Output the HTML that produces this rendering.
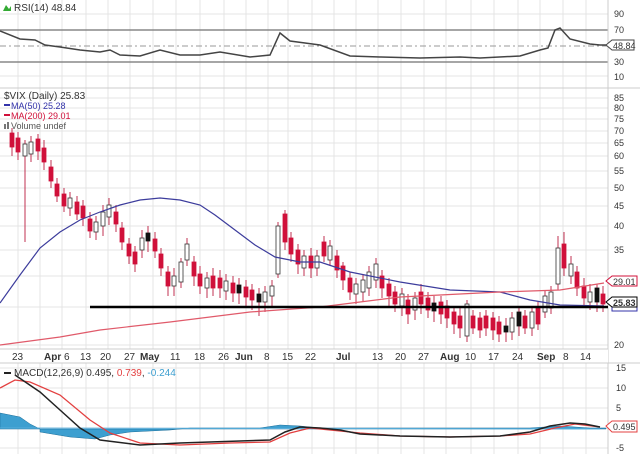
<!DOCTYPE html><html><head><style>
body{margin:0;background:#fff;width:640px;height:454px;overflow:hidden}
svg{display:block;font-family:"Liberation Sans",sans-serif}
.g line{stroke:#e4e4e4;stroke-width:1}
.r{fill:#d0103a;stroke:#d0103a;stroke-width:.8}
.w{fill:#fff;stroke:#333;stroke-width:.8}
.k{fill:#111;stroke:#111;stroke-width:.8}
.ax{font-size:9px;fill:#333}
.dx{font-size:10px;fill:#333}
</style></head><body>
<svg width="640" height="454" xmlns="http://www.w3.org/2000/svg">
<g class="g">
<line x1="18" y1="0" x2="18" y2="454"/><line x1="40" y1="0" x2="40" y2="454"/><line x1="62" y1="0" x2="62" y2="454"/><line x1="86" y1="0" x2="86" y2="454"/><line x1="108" y1="0" x2="108" y2="454"/><line x1="130" y1="0" x2="130" y2="454"/><line x1="153" y1="0" x2="153" y2="454"/><line x1="176" y1="0" x2="176" y2="454"/><line x1="200" y1="0" x2="200" y2="454"/><line x1="224" y1="0" x2="224" y2="454"/><line x1="246" y1="0" x2="246" y2="454"/><line x1="268" y1="0" x2="268" y2="454"/><line x1="288" y1="0" x2="288" y2="454"/><line x1="312" y1="0" x2="312" y2="454"/><line x1="334" y1="0" x2="334" y2="454"/><line x1="356" y1="0" x2="356" y2="454"/><line x1="378" y1="0" x2="378" y2="454"/><line x1="401" y1="0" x2="401" y2="454"/><line x1="424" y1="0" x2="424" y2="454"/><line x1="446" y1="0" x2="446" y2="454"/><line x1="471" y1="0" x2="471" y2="454"/><line x1="494" y1="0" x2="494" y2="454"/><line x1="518" y1="0" x2="518" y2="454"/><line x1="540" y1="0" x2="540" y2="454"/><line x1="563" y1="0" x2="563" y2="454"/><line x1="586" y1="0" x2="586" y2="454"/>
<line x1="0" y1="14" x2="608" y2="14"/><line x1="0" y1="76" x2="608" y2="76"/>
<line x1="0" y1="98" x2="608" y2="98"/><line x1="0" y1="108" x2="608" y2="108"/><line x1="0" y1="119" x2="608" y2="119"/><line x1="0" y1="131" x2="608" y2="131"/><line x1="0" y1="143" x2="608" y2="143"/><line x1="0" y1="156" x2="608" y2="156"/><line x1="0" y1="171" x2="608" y2="171"/><line x1="0" y1="188" x2="608" y2="188"/><line x1="0" y1="206" x2="608" y2="206"/><line x1="0" y1="226" x2="608" y2="226"/><line x1="0" y1="250" x2="608" y2="250"/><line x1="0" y1="276" x2="608" y2="276"/><line x1="0" y1="307" x2="608" y2="307"/><line x1="0" y1="345" x2="608" y2="345"/>
<line x1="0" y1="368" x2="608" y2="368"/><line x1="0" y1="388" x2="608" y2="388"/><line x1="0" y1="408" x2="608" y2="408"/><line x1="0" y1="428" x2="608" y2="428"/><line x1="0" y1="448" x2="608" y2="448"/>
</g>
<!-- RSI -->
<line x1="0" y1="30" x2="608" y2="30" stroke="#888" stroke-width="1.5"/>
<line x1="0" y1="62" x2="608" y2="62" stroke="#888" stroke-width="1.5"/>
<line x1="0" y1="46" x2="608" y2="46" stroke="#999" stroke-dasharray="6,3,2,3"/>
<polyline fill="none" stroke="#444" stroke-width="1.5" points="0,31 20,39 35,40 45,45 60,47 80,50 100,52 110,50 120,55 140,56 160,50 180,55 200,55 220,52 250,57 270,55 280,33 290,41 305,43 320,45 350,56 380,57 420,58 460,57 480,58 520,56 540,50 548,48 555,30 560,28 570,39 590,44 600,45 606,45"/>
<line x1="0" y1="88" x2="640" y2="88" stroke="#ccc"/>
<line x1="608" y1="0" x2="608" y2="454" stroke="#ccc"/>
<path d="M3,11 L6,5 L9,9 L11,6 L11,11Z" fill="#3a3"/>
<text x="14" y="11" font-size="10" fill="#333">RSI(14) 48.84</text>
<text class="ax" x="614" y="17">90</text><text class="ax" x="614" y="33">70</text><text class="ax" x="614" y="65">30</text><text class="ax" x="614" y="80">10</text>
<path d="M606,45 L612,40 H634 V50 H612Z" fill="#fff" stroke="#444"/><text class="ax" x="613" y="49">48.84</text>
<!-- wicks -->
<path fill="none" stroke="#c03050" stroke-width="1" d="M12,128V156M18,132V160M25,140V242M31,136V162M38,134V160M44,140V170M51,160V188M57,178V202M64,188V212M70,192V216M77,196V220M83,200V226M90,212V238M96,216V240M103,205V236M109,198V225M116,205V232M122,222V250M129,238V264M135,246V272M142,230V258M148,226V252M155,232V258M161,248V276M168,266V296M174,268V296M181,258V288M187,238V266M194,256V286M200,266V294M207,272V298M213,268V296M220,270V298M226,274V300M233,276V302M239,278V304M246,280V306M252,284V310M259,288V316M265,286V312M272,280V306M278,222V278M285,210V250M291,232V262M298,244V274M304,250V276M311,248V278M317,250V276M324,236V262M330,240V266M337,250V278M343,262V290M350,272V300M356,278V304M363,274V302M369,266V296M376,258V288M382,270V298M389,278V306M395,286V312M402,288V316M408,294V324M415,292V320M421,284V314M428,292V318M434,296V322M441,296V324M447,300V328M454,306V334M460,308V338M467,300V342M473,310V334M480,312V338M486,310V336M493,312V340M499,316V342M506,318V342M512,312V340M519,308V336M525,310V334M532,306V336M538,302V330M545,290V318M551,286V314M558,236V290M564,232V276M571,256V284M577,266V296M584,278V306M590,284V310M597,284V312M603,286V312"/>
<!-- bodies -->
<rect class="r" x="10" y="133" width="4" height="14"/><rect class="r" x="16" y="138" width="4" height="14"/><rect class="w" x="23" y="144" width="4" height="12"/><rect class="w" x="29" y="142" width="4" height="12"/><rect class="r" x="36" y="139" width="4" height="12"/><rect class="r" x="42" y="148" width="4" height="14"/>
<rect class="r" x="49" y="167" width="4" height="14"/><rect class="r" x="55" y="184" width="4" height="12"/><rect class="r" x="62" y="194" width="4" height="12"/><rect class="w" x="68" y="198" width="4" height="10"/><rect class="r" x="75" y="202" width="4" height="12"/><rect class="r" x="81" y="206" width="4" height="12"/>
<rect class="r" x="88" y="219" width="4" height="12"/><rect class="w" x="94" y="222" width="4" height="10"/><rect class="w" x="101" y="212" width="4" height="14"/><rect class="w" x="107" y="205" width="4" height="12"/><rect class="r" x="114" y="212" width="4" height="12"/><rect class="r" x="120" y="228" width="4" height="14"/>
<rect class="r" x="127" y="244" width="4" height="12"/><rect class="r" x="133" y="252" width="4" height="12"/><rect class="w" x="140" y="238" width="4" height="12"/><rect class="k" x="146" y="233" width="4" height="8"/><rect class="r" x="153" y="239" width="4" height="12"/><rect class="r" x="159" y="254" width="4" height="14"/>
<rect class="r" x="166" y="272" width="4" height="14"/><rect class="w" x="172" y="276" width="4" height="10"/><rect class="w" x="179" y="262" width="4" height="20"/><rect class="w" x="185" y="244" width="4" height="16"/><rect class="r" x="192" y="262" width="4" height="14"/><rect class="r" x="198" y="274" width="4" height="12"/>
<rect class="w" x="205" y="278" width="4" height="10"/><rect class="r" x="211" y="276" width="4" height="12"/><rect class="r" x="218" y="278" width="4" height="10"/><rect class="w" x="224" y="281" width="4" height="10"/><rect class="r" x="231" y="283" width="4" height="10"/><rect class="k" x="237" y="285" width="4" height="8"/>
<rect class="r" x="244" y="287" width="4" height="10"/><rect class="r" x="250" y="290" width="4" height="10"/><rect class="k" x="257" y="294" width="4" height="8"/><rect class="w" x="263" y="292" width="4" height="10"/><rect class="w" x="270" y="286" width="4" height="10"/><rect class="w" x="276" y="226" width="4" height="48"/>
<rect class="r" x="283" y="214" width="4" height="28"/><rect class="r" x="289" y="238" width="4" height="16"/><rect class="r" x="296" y="250" width="4" height="14"/><rect class="w" x="302" y="256" width="4" height="12"/><rect class="r" x="309" y="256" width="4" height="12"/><rect class="w" x="315" y="256" width="4" height="12"/>
<rect class="r" x="322" y="242" width="4" height="14"/><rect class="w" x="328" y="246" width="4" height="14"/><rect class="r" x="335" y="256" width="4" height="14"/><rect class="r" x="341" y="266" width="4" height="14"/><rect class="r" x="348" y="278" width="4" height="14"/><rect class="w" x="354" y="284" width="4" height="10"/>
<rect class="w" x="361" y="280" width="4" height="12"/><rect class="w" x="367" y="272" width="4" height="16"/><rect class="w" x="374" y="264" width="4" height="16"/><rect class="r" x="380" y="276" width="4" height="12"/><rect class="r" x="387" y="284" width="4" height="12"/><rect class="r" x="393" y="292" width="4" height="12"/>
<rect class="w" x="400" y="294" width="4" height="12"/><rect class="r" x="406" y="300" width="4" height="14"/><rect class="w" x="413" y="298" width="4" height="12"/><rect class="r" x="419" y="292" width="4" height="12"/><rect class="r" x="426" y="298" width="4" height="12"/><rect class="k" x="432" y="303" width="4" height="8"/>
<rect class="r" x="439" y="302" width="4" height="12"/><rect class="r" x="445" y="306" width="4" height="12"/><rect class="r" x="452" y="312" width="4" height="12"/><rect class="r" x="458" y="316" width="4" height="12"/><rect class="w" x="465" y="304" width="4" height="32"/><rect class="r" x="471" y="316" width="4" height="12"/>
<rect class="r" x="478" y="318" width="4" height="12"/><rect class="r" x="484" y="316" width="4" height="12"/><rect class="r" x="491" y="318" width="4" height="12"/><rect class="r" x="497" y="322" width="4" height="12"/><rect class="k" x="504" y="326" width="4" height="6"/><rect class="w" x="510" y="318" width="4" height="14"/>
<rect class="k" x="517" y="312" width="4" height="14"/><rect class="r" x="523" y="316" width="4" height="12"/><rect class="w" x="530" y="312" width="4" height="16"/><rect class="r" x="536" y="308" width="4" height="16"/><rect class="w" x="543" y="296" width="4" height="16"/><rect class="w" x="549" y="292" width="4" height="16"/>
<rect class="w" x="556" y="248" width="4" height="36"/><rect class="r" x="562" y="244" width="4" height="24"/><rect class="w" x="569" y="264" width="4" height="12"/><rect class="r" x="575" y="272" width="4" height="16"/><rect class="r" x="582" y="286" width="4" height="12"/><rect class="w" x="588" y="292" width="4" height="10"/>
<rect class="k" x="595" y="288" width="4" height="14"/><rect class="r" x="601" y="294" width="4" height="10"/>
<!-- MAs -->
<polyline fill="none" stroke="#3c3c9c" stroke-width="1.2" points="0,303 20,275 40,248 60,232 80,220 100,212 120,205 140,200 160,198 180,200 200,205 215,215 235,230 255,245 275,257 300,262 320,262 350,272 400,282 450,290 500,292 530,300 560,305 604,306"/>
<polyline fill="none" stroke="#e05a6a" stroke-width="1.2" points="0,345 60,337 100,330 170,322 250,312 320,307 400,297 500,292 560,290 604,283"/>
<line x1="90" y1="307" x2="608" y2="307" stroke="#000" stroke-width="2.5"/>
<text x="4" y="99" font-size="10" fill="#333">$VIX (Daily) 25.83</text>
<rect x="4" y="104" width="6" height="2" fill="#33a"/><text x="11" y="109" font-size="9" fill="#33a">MA(50) 25.28</text>
<rect x="4" y="114" width="6" height="2" fill="#d0103a"/><text x="11" y="119" font-size="9" fill="#d0103a">MA(200) 29.01</text>
<rect x="4" y="124" width="2" height="5" fill="#777"/><rect x="7" y="122" width="2" height="7" fill="#777"/><text x="11" y="129" font-size="9" fill="#555">Volume undef</text>
<text class="ax" x="614" y="101">85</text><text class="ax" x="614" y="111">80</text><text class="ax" x="614" y="122">75</text><text class="ax" x="614" y="134">70</text><text class="ax" x="614" y="146">65</text><text class="ax" x="614" y="159">60</text><text class="ax" x="614" y="174">55</text><text class="ax" x="614" y="191">50</text><text class="ax" x="614" y="209">45</text><text class="ax" x="614" y="229">40</text><text class="ax" x="614" y="253">35</text><text class="ax" x="614" y="348">20</text>
<path d="M606,281 L612,276 H637 V286 H612Z" fill="#fff" stroke="#d0103a"/><text class="ax" x="613" y="285">29.01</text>
<path d="M612,307 H637 V311 H612Z" fill="#fff" stroke="#33a"/>
<path d="M606,302 L612,297 H637 V307 H612Z" fill="#fff" stroke="#000"/><text class="ax" x="613" y="306" font-weight="bold" fill="#000">25.83</text>
<!-- x axis -->
<rect x="0" y="349" width="608" height="14" fill="#fff"/>
<line x1="0" y1="349" x2="608" y2="349" stroke="#ccc"/><line x1="0" y1="363" x2="640" y2="363" stroke="#ccc"/>
<text class="dx" x="12" y="360">23</text><text class="dx" x="44" y="360" font-weight="bold">Apr</text><text class="dx" x="64" y="360">6</text><text class="dx" x="80" y="360">13</text><text class="dx" x="100" y="360">20</text><text class="dx" x="124" y="360">27</text><text class="dx" x="140" y="360" font-weight="bold">May</text><text class="dx" x="170" y="360">11</text><text class="dx" x="194" y="360">18</text><text class="dx" x="218" y="360">26</text><text class="dx" x="235" y="360" font-weight="bold">Jun</text><text class="dx" x="264" y="360">8</text><text class="dx" x="282" y="360">15</text><text class="dx" x="305" y="360">22</text><text class="dx" x="336" y="360" font-weight="bold">Jul</text><text class="dx" x="372" y="360">13</text><text class="dx" x="395" y="360">20</text><text class="dx" x="418" y="360">27</text><text class="dx" x="440" y="360" font-weight="bold">Aug</text><text class="dx" x="465" y="360">10</text><text class="dx" x="488" y="360">17</text><text class="dx" x="512" y="360">24</text><text class="dx" x="537" y="360" font-weight="bold">Sep</text><text class="dx" x="563" y="360">8</text><text class="dx" x="580" y="360">14</text>
<!-- MACD -->
<polygon fill="#3d9fd0" stroke="#1d6f9a" stroke-width=".5" points="0,413 20,417 30,424 40,429 40,432 70,437 95,439 110,435 130,432 170,430 190,428 260,428 280,425 300,426 320,428 530,428 560,426 590,428 606,428 606,429 0,429"/>
<polyline fill="none" stroke="#5ab0dd" stroke-width="1" points="0,428 600,429"/>
<polyline fill="none" stroke="#e34040" stroke-width="1.3" points="0,388 15,380 30,382 60,395 90,420 110,433 140,443 180,445 230,443 270,442 290,433 310,428 330,430 360,433 400,436 450,437 500,436 530,434 555,428 575,424 600,427"/>
<polyline fill="none" stroke="#222" stroke-width="1.5" points="15,375 40,392 60,410 80,428 100,440 140,445 180,443 270,440 285,432 300,427 320,428 340,430 360,434 400,436 450,437 500,436 530,432 550,426 570,423 585,424 600,427"/>
<rect x="4" y="372" width="7" height="2" fill="#222"/>
<text x="14" y="376" font-size="10" fill="#333">MACD(12,26,9) 0.495, <tspan fill="#e34040">0.739</tspan>, <tspan fill="#3d9fd0">-0.244</tspan></text>
<text class="ax" x="616" y="371">15</text><text class="ax" x="616" y="391">10</text><text class="ax" x="616" y="411">5</text><text class="ax" x="616" y="451">-5</text>
<path d="M606,426 L612,421 H637 V432 H612Z" fill="#fff" stroke="#e34040"/><text class="ax" x="613" y="430">0.495</text>
</svg>
</body></html>
